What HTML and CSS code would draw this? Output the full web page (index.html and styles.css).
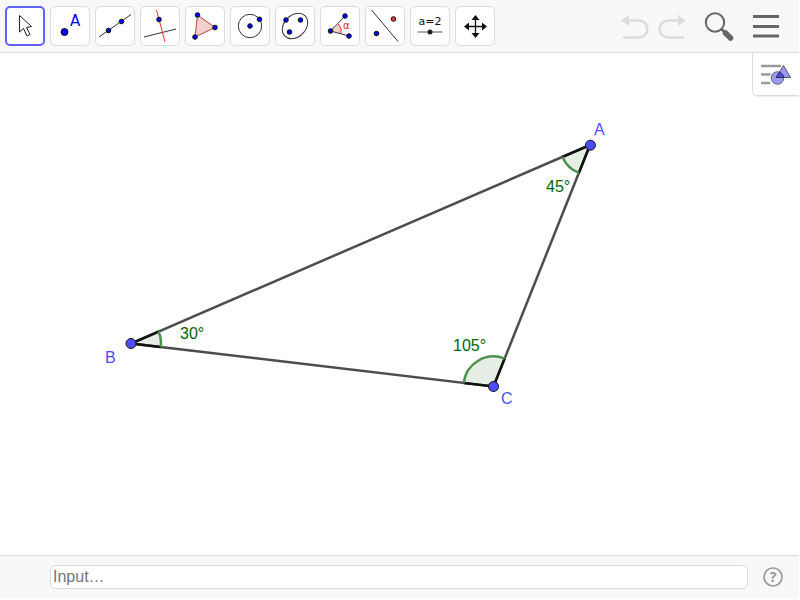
FILE: index.html
```html
<!DOCTYPE html>
<html lang="en">
<head>
  <meta charset="UTF-8">
  <meta name="viewport" content="width=device-width, initial-scale=1.0">
  <title>Geometry</title>
  <link rel="stylesheet" href="styles.css">
</head>
<body>

  <header class="toolbar">
    <div class="tools">
      <button type="button" class="tool selected" aria-label="Move">
        <svg viewBox="2 2 36 36"><path d="M14.500 9.500V26L18.500 22.500L22 30L25 28.500L21.500 21.500L26.500 20.500Z" fill="#fff" stroke="#222"/></svg>
      </button>
      <button type="button" class="tool" aria-label="Point">
        <svg viewBox="2 2 36 36">
          <circle class="dot" cx="14.500" cy="26" r="3.500"/>
          <text class="point-letter" x="20" y="20">A</text>
        </svg>
      </button>
      <button type="button" class="tool" aria-label="Line">
        <svg viewBox="2 2 36 36">
          <path class="stroke" d="M4 31L36 8.500"/>
          <circle class="dot" cx="13.500" cy="24.500" r="2.300"/>
          <circle class="dot" cx="26.500" cy="15.500" r="2.300"/>
        </svg>
      </button>
      <button type="button" class="tool" aria-label="Perpendicular line">
        <svg viewBox="2 2 36 36">
          <path class="stroke" d="M4 31L36 23"/>
          <path class="red-stroke" d="M16.500 4L25 36"/>
          <circle class="dot" cx="19" cy="13.500" r="2.300"/>
        </svg>
      </button>
      <button type="button" class="tool" aria-label="Polygon">
        <svg viewBox="2 2 36 36">
          <path d="M12.500 9L30 21.500L10 31Z" fill="#f2d0cb" stroke="#b5483a"/>
          <circle class="dot" cx="12.500" cy="9" r="2.300"/>
          <circle class="dot" cx="30" cy="21.500" r="2.300"/>
          <circle class="dot" cx="10" cy="31" r="2.300"/>
        </svg>
      </button>
      <button type="button" class="tool" aria-label="Circle with center">
        <svg viewBox="2 2 36 36">
          <circle class="stroke" cx="20" cy="20" r="11.700"/>
          <circle class="dot" cx="20" cy="20" r="2.300"/>
          <circle class="dot" cx="29.500" cy="13.300" r="2.300"/>
        </svg>
      </button>
      <button type="button" class="tool" aria-label="Ellipse">
        <svg viewBox="2 2 36 36">
          <ellipse class="stroke" cx="20" cy="20" rx="14.300" ry="10.800" transform="rotate(-45 20 20)"/>
          <circle class="dot" cx="11" cy="14" r="2.300"/>
          <circle class="dot" cx="25.500" cy="14" r="2.300"/>
          <circle class="dot" cx="14.500" cy="26" r="2.300"/>
        </svg>
      </button>
      <button type="button" class="tool" aria-label="Angle">
        <svg viewBox="2 2 36 36">
          <path d="M10.500 25L18.300 18A10.500 10.500 0 0 1 21 27.500Z" fill="#f2d0cb"/>
          <path class="red-stroke" d="M18.300 18A10.500 10.500 0 0 1 21 27.500"/>
          <path class="stroke" d="M25 10L10.500 25L29 30"/>
          <circle class="dot" cx="10.500" cy="25" r="2.300"/>
          <circle class="dot" cx="25" cy="10" r="2.300"/>
          <circle class="dot" cx="29" cy="30" r="2.300"/>
          <text class="alpha" x="23" y="23">α</text>
        </svg>
      </button>
      <button type="button" class="tool" aria-label="Reflect about line">
        <svg viewBox="2 2 36 36">
          <path class="stroke" d="M6.500 4L33 35.500"/>
          <circle class="dot" cx="11.500" cy="27.500" r="2.300"/>
          <circle class="dot red" cx="28.500" cy="13" r="2.300"/>
        </svg>
      </button>
      <button type="button" class="tool" aria-label="Slider">
        <svg viewBox="2 2 36 36">
          <text class="slider-text" x="20" y="19">a=2</text>
          <path d="M7.500 26H32.500" stroke="#555"/>
          <circle cx="20" cy="26" r="2.500" fill="#222"/>
        </svg>
      </button>
      <button type="button" class="tool" aria-label="Move graphics view">
        <svg viewBox="2 2 36 36">
          <path d="M20.500 12V29M12 20.500H29" stroke="#111" stroke-width="1.300"/>
          <path d="M20.500 9L24.500 14H16.500ZM20.500 32L24.500 27H16.500ZM9 20.500L14 16.500V24.500ZM32 20.500L27 16.500V24.500Z" fill="#111"/>
        </svg>
      </button>
    </div>

    <div class="actions">
      <button type="button" class="action" aria-label="Undo">
        <svg width="30" height="30" viewBox="0 0 30 30">
          <path d="M8 9.500H18C30.500 9.500 30.500 26.500 18 26.500H3" fill="none" stroke="#dcdcdc" stroke-width="2.600"/>
          <path d="M1 9.500L9 4V15Z" fill="#dcdcdc"/>
        </svg>
      </button>
      <button type="button" class="action" aria-label="Redo">
        <svg width="30" height="30" viewBox="0 0 30 30">
          <path d="M22 9.500H12C-0.500 9.500 -0.500 26.500 12 26.500H27" fill="none" stroke="#dcdcdc" stroke-width="2.600"/>
          <path d="M29 9.500L21 4V15Z" fill="#dcdcdc"/>
        </svg>
      </button>
      <button type="button" class="action search" aria-label="Search">
        <svg width="30" height="30" viewBox="0 0 30 30">
          <circle cx="11" cy="11.500" r="9.200" fill="none" stroke="#666" stroke-width="2"/>
          <path d="M17.500 18L21 21.500" stroke="#666" stroke-width="2.500"/>
          <path d="M21.500 22L26.500 27" stroke="#666" stroke-width="5.500" stroke-linecap="round"/>
        </svg>
      </button>
      <button type="button" class="action menu" aria-label="Menu">
        <svg width="28" height="28" viewBox="0 0 28 28">
          <path d="M1 4.500H27M1 14.500H27M1 24H27" stroke="#666" stroke-width="3"/>
        </svg>
      </button>
    </div>
  </header>

  <main class="graphics">
    <svg class="drawing" viewBox="0 53 799 502">
      <!-- angles -->
      <path class="sector" d="M590 145L562.500 156.900A30 30 0 0 0 578.900 172.900Z"/>
      <path class="sector" d="M131 343.500L158.500 331.600A30 30 0 0 1 160.800 347Z"/>
      <path class="sector" d="M493.500 386.500L463.700 383A30 30 0 0 1 504.600 358.600Z"/>
      <!-- triangle -->
      <path class="side" d="M590 145L131 343.500L493.500 386.500Z"/>
      <path class="arm" d="M562.500 156.900L590 145L578.900 172.900"/>
      <path class="arm" d="M158.500 331.600L131 343.500L160.800 347"/>
      <path class="arm" d="M463.700 383L493.500 386.500L504.600 358.600"/>
      <path class="arc" d="M562.500 156.900A30 30 0 0 0 578.900 172.900"/>
      <path class="arc" d="M158.500 331.600A30 30 0 0 1 160.800 347"/>
      <path class="arc" d="M463.700 383A30 30 0 0 1 504.600 358.600"/>
      <!-- points -->
      <circle class="vertex" cx="590.400" cy="145.200" r="5"/>
      <circle class="vertex" cx="131" cy="343.500" r="5"/>
      <circle class="vertex" cx="493.500" cy="386.500" r="5"/>
      <text class="point-label" x="594" y="135">A</text>
      <text class="point-label" x="105" y="363">B</text>
      <text class="point-label" x="501" y="404">C</text>
      <text class="angle-label" x="546" y="192">45°</text>
      <text class="angle-label" x="180" y="339">30°</text>
      <text class="angle-label" x="453" y="351">105°</text>
    </svg>

    <button type="button" class="style-button" aria-label="Style bar">
      <svg width="32" height="24" viewBox="0 0 32 24">
        <path d="M1 4H21M1 12.500H11M1 21H10" stroke="#999" stroke-width="2.400"/>
        <circle cx="17.500" cy="16" r="8" fill="#fff"/>
        <path d="M23.500 1L14 16H32Z" fill="#fff"/>
        <circle cx="17.500" cy="16" r="6.300" fill="#9999ff" stroke="#666"/>
        <path d="M23.500 3.500L30.500 15.500H16Z" fill="#9999ff" stroke="#555"/>
        <path d="M19.500 10Q23.500 12 24 15.500H16.500Z" fill="#4d4dff" stroke="#333"/>
      </svg>
    </button>
  </main>

  <footer class="input-bar">
    <input type="text" class="algebra-input" placeholder="Input…" aria-label="Input">
    <button type="button" class="help" aria-label="Help">
      <svg width="20" height="20" viewBox="0 0 20 20">
        <circle cx="10" cy="10" r="9" fill="none" stroke="#999" stroke-width="1.700"/>
        <text class="help-mark" x="10" y="15">?</text>
      </svg>
    </button>
  </footer>

</body>
</html>
```
FILE: styles.css
```css
* {
  box-sizing: border-box;
}

body {
  margin: 0;
  padding: 0 1px 1px 0;
  min-height: 100vh;
  display: flex;
  flex-direction: column;
  background-color: #fff;
  font-family: "Liberation Sans", Arial, sans-serif;
}

button {
  padding: 0;
  border: none;
  background: none;
  cursor: pointer;
}

svg {
  display: block;
}

/* toolbar */
.toolbar {
  display: flex;
  justify-content: space-between;
  align-items: center;
  padding: 6px 19px 6px 5px;
  background-color: #f8f8f8;
  border-bottom: 1px solid #dcdcdc;
}

.tools {
  display: flex;
  gap: 5px;
}

.tool {
  display: flex;
  align-items: center;
  justify-content: center;
  width: 40px;
  height: 40px;
  background-color: #fff;
  border: 1px solid #dcdcdc;
  border-radius: 5px;
}

.tool.selected {
  border: 2px solid #6161ff;
}

.tool svg {
  flex: none;
  width: 36px;
  height: 36px;
}

.stroke {
  fill: none;
  stroke: #333;
  stroke-width: 1px;
}

.red-stroke {
  fill: none;
  stroke: #ee3333;
  stroke-width: 1px;
}

.dot {
  fill: #0000ff;
  stroke: #111;
  stroke-width: 1px;
}

.dot.red {
  fill: #ff3333;
}

.point-letter {
  font: 15px "DejaVu Sans", sans-serif;
  fill: #0000ff;
}

.alpha {
  font: 10px "DejaVu Sans", sans-serif;
  fill: #dd2222;
}

.slider-text {
  font: 11px "DejaVu Sans", sans-serif;
  fill: #111;
  text-anchor: middle;
}

.actions {
  display: flex;
  align-items: center;
  gap: 7px;
}

.search {
  margin-left: 10px;
}

.menu {
  margin-left: 11px;
}

/* graphics view */
.graphics {
  position: relative;
  flex: 1;
  background-color: #fff;
}

.drawing {
  width: 100%;
}

.side {
  fill: none;
  stroke: #4d4d4d;
  stroke-width: 2.5px;
}

.arm {
  fill: none;
  stroke: #111;
  stroke-width: 2.5px;
}

.sector {
  fill: #e6eee6;
}

.arc {
  fill: none;
  stroke: #4d934d;
  stroke-width: 2.5px;
}

.vertex {
  fill: #4d4dff;
  stroke: #111;
  stroke-width: 1px;
}

.point-label {
  font-size: 16px;
  fill: #4d4dff;
}

.angle-label {
  font-size: 16px;
  fill: #006400;
}

.style-button {
  position: absolute;
  top: 0;
  right: 0;
  width: 47px;
  height: 43px;
  padding-left: 7px;
  background-color: #fff;
  border: solid #dcdcdc;
  border-width: 0 0 1px 1px;
  border-radius: 0 0 0 5px;
  box-shadow: 0 1px 1px #eee;
}

/* input bar */
.input-bar {
  display: flex;
  align-items: center;
  gap: 15px;
  padding: 9px 16px 10px 50px;
  background-color: #f8f8f8;
  border-top: 1px solid #dcdcdc;
}

.algebra-input {
  flex: 1;
  min-width: 0;
  height: 24px;
  padding: 0 2px;
  font: 16px "Liberation Sans", Arial, sans-serif;
  border: 1px solid #dcdcdc;
  border-radius: 5px;
}

.algebra-input::placeholder {
  color: #757575;
}

.help-mark {
  font: bold 14px "Open Sans", sans-serif;
  fill: #999;
  text-anchor: middle;
}
```
